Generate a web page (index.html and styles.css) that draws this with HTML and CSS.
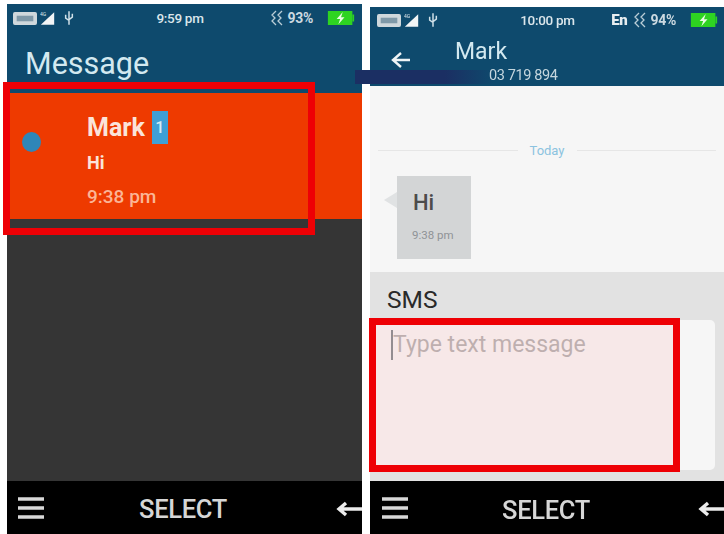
FILE: index.html
```html
<!DOCTYPE html>
<html lang="en">
<head>
<meta charset="utf-8">
<title>Message</title>
<link rel="stylesheet" href="styles.css">
</head>
<body>
<main class="stage">
  <section class="phone phone-left">
    <header class="appbar appbar-left">
      <div class="status">
        <div class="status-icons">
          <svg class="sim" viewBox="0 0 26 14"><rect width="26" height="14" rx="2" fill="#cfd8dc"/><rect x="4" y="4" width="18" height="6" fill="#7f99a8"/></svg>
          <svg class="signal" viewBox="0 0 24 18"><path d="M1 17L17 2V17Z" fill="#f2f5f6"/><text x="0" y="6" class="net">4G</text></svg>
          <svg class="usb" viewBox="0 0 12 18"><path d="M6 1V17M2 5V9L6 12M10 4V8L6 11" fill="none" stroke="#cfe0e8" stroke-width="1.8"/></svg>
        </div>
        <span class="clock">9:59 pm</span>
        <div class="status-right">
          <span class="pct">
            <svg class="wave" viewBox="0 0 18 16"><path d="M7 1L3 5L6 8L3 11L7 15M13 1L9 5L12 8L9 11L13 15" fill="none" stroke="#b9cdd6" stroke-width="1.3"/></svg>93%
          </span>
          <svg class="battery" viewBox="0 0 30 16"><rect width="28" height="16" fill="#2ed321"/><rect x="28" y="4" width="2" height="8" fill="#2ed321"/><path d="M17 1L10 9H14L12 15L19 7H15Z" fill="#e9fbe4"/></svg>
        </div>
      </div>
      <h1 class="title">Message</h1>
    </header>
    <div class="thread-row">
      <span class="dot"></span>
      <div class="thread-text">
        <div class="thread-name">Mark <span class="badge">1</span></div>
        <div class="thread-msg">Hi</div>
        <div class="thread-time">9:38 pm</div>
      </div>
    </div>
    <div class="empty"></div>
    <footer class="softkeys">
      <svg class="menu" viewBox="0 0 26 22"><path d="M0 2H26M0 11H26M0 20H26" stroke="#d8d8d8" stroke-width="3.4"/></svg>
      <span class="select">SELECT</span>
      <svg class="back" viewBox="0 0 26 20"><path d="M26 10H4M10 4L3 10L10 16" fill="none" stroke="#ececec" stroke-width="3.4"/></svg>
    </footer>
    <div class="mark mark-left"></div>
  </section>

  <section class="phone phone-right">
    <div class="strip"></div>
    <header class="appbar appbar-right">
      <div class="status status-r">
        <div class="status-icons">
          <svg class="sim" viewBox="0 0 26 14"><rect width="26" height="14" rx="2" fill="#cfd8dc"/><rect x="4" y="4" width="18" height="6" fill="#7f99a8"/></svg>
          <svg class="signal" viewBox="0 0 24 18"><path d="M1 17L17 2V17Z" fill="#f2f5f6"/><text x="0" y="6" class="net">4G</text></svg>
          <svg class="usb" viewBox="0 0 12 18"><path d="M6 1V17M2 5V9L6 12M10 4V8L6 11" fill="none" stroke="#cfe0e8" stroke-width="1.8"/></svg>
        </div>
        <span class="clock clock-r">10:00 pm</span>
        <div class="status-right">
          <span class="pct">
            <b class="lang">En</b>
            <svg class="wave" viewBox="0 0 18 16"><path d="M7 1L3 5L6 8L3 11L7 15M13 1L9 5L12 8L9 11L13 15" fill="none" stroke="#b9cdd6" stroke-width="1.3"/></svg>94%
          </span>
          <svg class="battery" viewBox="0 0 30 16"><rect width="28" height="16" fill="#2ed321"/><rect x="28" y="4" width="2" height="8" fill="#2ed321"/><path d="M17 1L10 9H14L12 15L19 7H15Z" fill="#e9fbe4"/></svg>
        </div>
      </div>
      <div class="contact">
        <svg class="nav-back" viewBox="0 0 20 18"><path d="M19 9H3M10 2L2 9L10 16" fill="none" stroke="#eef4f6" stroke-width="2.4"/></svg>
        <div class="contact-text">
          <div class="contact-name">Mark</div>
          <div class="contact-num">03 719 894</div>
        </div>
      </div>
    </header>
    <div class="chat">
      <div class="day"><span class="rule"></span><span class="day-label">Today</span><span class="rule"></span></div>
      <div class="bubble">
        <div class="bubble-text">Hi</div>
        <div class="bubble-time">9:38 pm</div>
      </div>
    </div>
    <div class="compose">
      <div class="compose-label">SMS</div>
      <div class="input"><span class="caret"></span><span class="placeholder">Type text message</span></div>
    </div>
    <footer class="softkeys softkeys-r">
      <svg class="menu" viewBox="0 0 26 22"><path d="M0 2H26M0 11H26M0 20H26" stroke="#d8d8d8" stroke-width="3.4"/></svg>
      <span class="select">SELECT</span>
      <svg class="back" viewBox="0 0 26 20"><path d="M26 10H4M10 4L3 10L10 16" fill="none" stroke="#ececec" stroke-width="3.4"/></svg>
    </footer>
    <div class="mark mark-right"></div>
  </section>
</main>
</body>
</html>
```

FILE: styles.css
```css
* { box-sizing: border-box; }
html, body { margin: 0; height: 100%; background: #fff; overflow: hidden; }
body { font-family: Roboto, "Liberation Sans", sans-serif; }

.stage { display: flex; width: 724px; height: 534px; gap: 8px; padding-left: 7px; filter: blur(0.7px); }
.phone { position: relative; display: flex; flex-direction: column; width: 355px; height: 530px; margin-top: 4px; }
.phone-right { width: 354px; height: 527px; margin-top: 7px; }

.appbar { background: #0e4a6d; color: #fff; flex: none; position: relative; }
.appbar-left { height: 89px; }
.appbar-right { height: 79px; }

.status { display: grid; grid-template-columns: 1fr auto 1fr; align-items: center; height: 28px; padding: 0 7px 0 6px; }
.status-r { height: 26px; padding: 0 6px 0 7px; }
.status-icons { display: flex; align-items: center; gap: 3px; }
.sim { width: 24px; height: 13px; flex: none; }
.signal { width: 20px; height: 16px; flex: none; }
.usb { width: 10px; height: 16px; flex: none; margin-left: 1px; }
.net { font-size: 6px; fill: #dfe8ec; }
.clock { font-size: 13.5px; font-weight: 500; color: #dbe6eb; margin-right: 8px; letter-spacing: -0.3px; }
.clock-r { margin-right: 0; }
.status-right { display: flex; align-items: center; justify-content: flex-end; gap: 14px; }
.pct { display: flex; align-items: center; font-size: 14px; font-weight: 700; color: #cbd9e0; letter-spacing: -0.3px; }
.wave { width: 18px; height: 16px; flex: none; }
.lang { font-size: 15px; color: #e6edf0; margin-right: 5px; }
.battery { width: 28px; height: 14px; flex: none; }

.title { margin: 13px 0 0 18px; font-size: 30.5px; line-height: 38px; font-weight: 400; color: #d3e9f0; }

.thread-row { display: flex; align-items: flex-start; height: 126px; flex: none; background: #ee3a00; color: #fbe4da; padding-top: 16px; }
.dot { width: 19px; height: 20px; margin: 23px 0 0 15px; border-radius: 50%; background: #2f86b8; flex: none; }
.thread-text { margin-left: 46px; }
.thread-name { display: flex; align-items: center; gap: 7px; height: 36px; font-size: 25px; font-weight: 700; }
.badge { display: block; width: 16px; height: 33px; background: #3f9fd6; color: #d5ecf6; font-size: 16px; font-weight: 500; line-height: 33px; text-align: center; }
.thread-msg { margin-top: 6px; font-size: 18px; line-height: 24px; font-weight: 700; }
.thread-time { margin-top: 9px; font-size: 19px; line-height: 26px; font-weight: 500; color: #fbb596; }

.empty { flex: 1; background: #353535; }

.softkeys { display: flex; align-items: center; height: 53px; flex: none; background: #000; color: #d6d6d6; padding-top: 2px; overflow: hidden; }
.menu { width: 26px; height: 22px; margin: -2px 0 0 11px; flex: none; }
.select { margin-left: 95px; font-size: 25.5px; font-weight: 500; letter-spacing: -0.3px; }
.back { width: 26px; height: 20px; margin-left: auto; flex: none; }
.softkeys-r { padding-top: 5px; }
.softkeys-r .menu { margin: -5px 0 0 12px; }
.softkeys-r .select { margin-left: 94px; }
.softkeys-r .back { margin-top: -2px; }

.contact { display: flex; align-items: flex-start; }
.nav-back { width: 20px; height: 18px; margin: 18px 0 0 21px; flex: none; }
.contact-text { margin-left: 44px; position: relative; z-index: 1; }
.contact-name { font-size: 23px; line-height: 29px; margin-top: 4px; color: #d3e9f0; }
.contact-num { margin: 2px 0 0 34px; font-size: 14.5px; line-height: 16px; color: #c4d6de; letter-spacing: -0.4px; }

.strip { position: absolute; left: -15px; top: 63px; width: 140px; height: 14px; background: #1b2f63; }
.phone-right .appbar::after { content: ""; position: absolute; left: 0; top: 63px; width: 125px; height: 14px; background: linear-gradient(90deg, #1b2f63, #1b2f63 60%, rgba(27,47,99,0)); }

.chat { height: 186px; flex: none; background: #f6f6f6; padding-top: 57px; }
.day { display: flex; align-items: center; gap: 12px; padding: 0 8px; }
.rule { flex: 1; height: 1px; background: #e6e6e6; }
.day-label { font-size: 13px; color: #8cc3e0; }
.bubble { position: relative; width: 74px; height: 83px; margin: 18px 0 0 27px; padding: 14px 0 0 16px; background: #d3d5d6; }
.bubble::before { content: ""; position: absolute; left: -13px; top: 16px; border-style: solid; border-color: transparent; border-width: 8px 13px 8px 0; border-right-color: #e0e2e3; }
.bubble-text { font-size: 22px; line-height: 26px; font-weight: 500; color: #4c4c4c; }
.bubble-time { margin: 11px 0 0 -1px; font-size: 11.5px; line-height: 16px; color: #8f9396; }

.compose { flex: 1; background: #e2e2e2; padding: 13px 9px 11px 5px; display: flex; flex-direction: column; }
.compose-label { margin-left: 12px; font-size: 24.5px; line-height: 29px; color: #2a2a2a; }
.input { flex: 1; margin-top: 6px; background: #f6f6f6; border-radius: 5px; padding: 10px 0 0 16px; display: flex; align-items: flex-start; }
.caret { width: 2px; height: 30px; background: #5e6a70; flex: none; }
.placeholder { font-size: 23px; line-height: 30px; font-weight: 400; color: #9f9f9f; }

.mark { position: absolute; border: 7px solid #ee0005; pointer-events: none; }
.mark-left { left: -4px; top: 78px; width: 312px; height: 153px; }
.mark-right { left: -1px; top: 311px; width: 311px; height: 154px; background: rgba(250, 205, 205, 0.35); }
```
